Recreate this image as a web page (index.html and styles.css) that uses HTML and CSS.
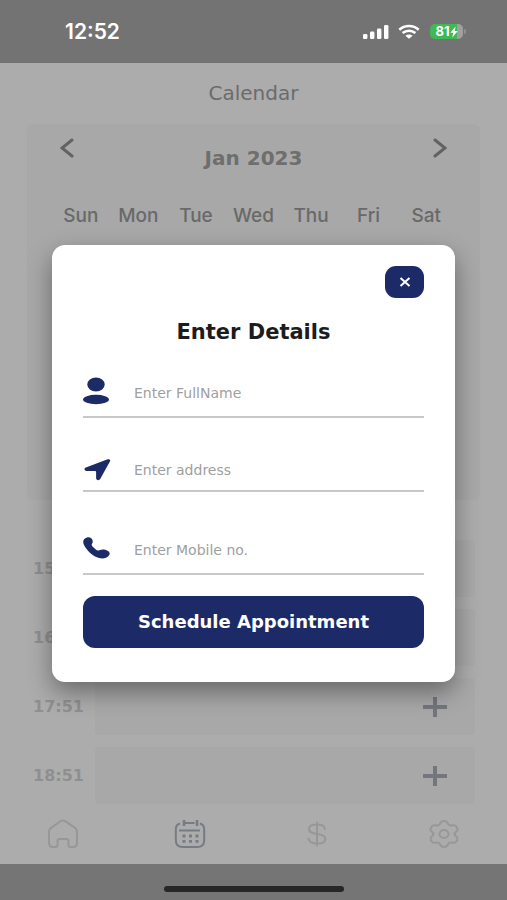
FILE: index.html
```html
<!DOCTYPE html>
<html lang="en">
<head>
<meta charset="utf-8">
<meta name="viewport" content="width=device-width, initial-scale=1">
<title>Calendar</title>
<link rel="stylesheet" href="styles.css">
</head>
<body>
<div class="app">
  <header class="status">
    <span class="status-time">12:52</span>
    <div class="status-icons">
      <svg width="26" height="16" viewBox="0 0 26 16" fill="#fff"><rect x="0" y="10" width="4.400" height="5" rx="1.300"/><rect x="7" y="7.500" width="4.400" height="7.500" rx="1.300"/><rect x="14" y="4.500" width="4.400" height="10.500" rx="1.300"/><rect x="21" y="1" width="4.400" height="14" rx="1.300"/></svg>
      <svg class="wifi" width="22" height="16" viewBox="0 0 22 16" fill="none" stroke="#fff" stroke-width="2.600"><path d="M1.300 5.700C6.800.8 15.200.8 20.700 5.700M4.600 9.100c3.700-3.200 9.100-3.200 12.800 0"/><path d="M7.400 11.700c2.100-1.700 5.100-1.700 7.200 0L11 14.800z" fill="#fff" stroke="none"/></svg>
      <div class="battery">
        <span>81</span>
        <svg width="8" height="12" viewBox="0 0 8 12" fill="#fff"><path d="M5.600.5.3 6.800h3L2.200 11.500 7.800 5H4.700z"/></svg>
      </div>
    </div>
  </header>

  <main class="main">
    <h1 class="page-title">Calendar</h1>
    <section class="calendar">
      <div class="month">
        <button class="arrow" type="button" aria-label="Previous month"><svg width="14" height="20" viewBox="0 0 14 20"><path d="M12 2 2 10l10 8"/></svg></button>
        <h2 class="month-name">Jan 2023</h2>
        <button class="arrow" type="button" aria-label="Next month"><svg width="14" height="20" viewBox="0 0 14 20"><path d="m2 2 10 8-10 8"/></svg></button>
      </div>
      <div class="weekdays"><span>Sun</span><span>Mon</span><span>Tue</span><span>Wed</span><span>Thu</span><span>Fri</span><span>Sat</span></div>
    </section>
    <ul class="slots">
      <li class="slot"><time>15:51</time><div class="slot-box"><button class="add" type="button" aria-label="Add at 15:51"></button></div></li>
      <li class="slot"><time>16:51</time><div class="slot-box"><button class="add" type="button" aria-label="Add at 16:51"></button></div></li>
      <li class="slot"><time>17:51</time><div class="slot-box"><button class="add" type="button" aria-label="Add at 17:51"></button></div></li>
      <li class="slot"><time>18:51</time><div class="slot-box"><button class="add" type="button" aria-label="Add at 18:51"></button></div></li>
    </ul>
  </main>

  <nav class="tabs">
    <a href="#home" aria-label="Home"><svg width="32" height="30" viewBox="0 0 32 30"><path d="M2 12.500c0-1.600.6-2.600 2-3.600L13.500 2.300c1.800-1.200 3.200-1.200 5 0L28 8.900c1.400 1 2 2 2 3.600V24c0 2.600-1.500 4-4 4h-2.500c-1.400 0-2.100-.7-2.100-2v-4c0-1.400-.7-2-2-2h-6.800c-1.300 0-2 .6-2 2v4c0 1.300-.7 2-2.100 2H6c-2.500 0-4-1.400-4-4z"/></svg></a>
    <a class="active" href="#calendar" aria-label="Calendar"><svg width="32" height="30" viewBox="0 0 32 30"><path d="M6 4.500c-2.900.7-4.200 2.700-4.200 6V21c0 5 2.200 7 7 7h14.400c4.800 0 7-2 7-7V10.500c0-3.300-1.300-5.300-4.200-6M10.500 4h10M5 11.500h21"/><path d="M10 1v6M23 1v6" stroke-width="2.600"/><path d="M8.500 17h3m3.500 0h3m3.500 0h3M8.500 22.300h3m3.500 0h3m3.500 0h3" stroke-width="2.800"/></svg></a>
    <a href="#payments" aria-label="Payments"><svg width="22" height="28" viewBox="0 0 22 28"><path d="M11 2.500v23M19 9c-.5-3-3.200-4.400-7.800-4.400S3 6 3 9c0 3.300 2.600 4.200 8 4.900 5.500.7 8.400 1.700 8.400 5 0 3.200-3.100 4.700-8.200 4.700-5 0-8.200-1.600-8.600-4.900"/></svg></a>
    <a href="#settings" aria-label="Settings"><svg width="32" height="30" viewBox="0 0 32 30"><path d="M12.600 3.600C13.300 2.500 14.400 2 16 2s2.700.5 3.400 1.600l.9 1.600c.6 1 1.500 1.400 2.700 1.300l2.200-.2c1.500-.1 2.600.4 3.400 1.600l.6 1c.7 1.100.5 2.200-.5 3.200L27.300 13.500c-.8.9-.8 2.100 0 3l1.400 1.400c1 1 1.200 2.100.5 3.200l-.6 1c-.8 1.200-1.900 1.700-3.400 1.600l-2.200-.2c-1.200-.1-2.100.3-2.700 1.300l-.9 1.600C18.700 27.500 17.600 28 16 28s-2.700-.5-3.400-1.600l-.9-1.600c-.6-1-1.500-1.400-2.700-1.300l-2.200.2c-1.500.1-2.600-.4-3.400-1.600l-.6-1c-.7-1.100-.5-2.200.5-3.200l1.400-1.400c.8-.9.8-2.100 0-3l-1.400-1.400c-1-1-1.200-2.100-.5-3.200l.6-1c.8-1.200 1.900-1.700 3.400-1.600l2.200.2c1.200.1 2.100-.3 2.700-1.300z"/><ellipse cx="16" cy="15" rx="4.500" ry="4"/></svg></a>
  </nav>
  <footer class="home-area"><div class="home-bar"></div></footer>

  <div class="overlay">
    <section class="modal" role="dialog" aria-labelledby="dialog-title">
      <button class="close" type="button" aria-label="Close"><svg width="12" height="10" viewBox="0 0 12 10"><path d="m1.500 1 9 8m0-8-9 8"/></svg></button>
      <h2 class="modal-title" id="dialog-title">Enter Details</h2>
      <form>
        <div class="field">
          <label for="name" aria-label="Full name"><svg width="27" height="32" viewBox="0 0 27 32"><ellipse cx="13" cy="7.500" rx="8.700" ry="7"/><ellipse cx="13" cy="22.500" rx="13" ry="4.700"/></svg></label>
          <input id="name" type="text" placeholder="Enter FullName">
        </div>
        <div class="field field-address">
          <label for="address" aria-label="Address"><svg width="28" height="22" viewBox="0 0 28 22"><path d="M24.700.3c1.800-.5 3.100.7 2.200 2.300L17.200 20c-1 1.800-4.100 1.400-4.100-.7v-6c0-.8-.4-1.200-1.300-1.200l-8.300-.2c-2.300-.1-2.800-2.500-.6-3.300z"/></svg></label>
          <input id="address" type="text" placeholder="Enter address">
        </div>
        <div class="field field-mobile">
          <label for="mobile" aria-label="Mobile number"><svg width="27" height="26" viewBox="0 0 27 26"><path d="M1.600 1.800C3.600-.2 6.700-.3 8.200 1.200c1.700 1.600 2 3.700 1 5.300-.8 1.100-.7 1.800.3 2.900l3.300 3.100c1.300 1.100 2.100 1.300 3.500.8 2.300-1 4.600-.9 6.600-.3 3.600 1 4.600 3.200 3.100 5.300-2 2.900-6 3.800-9.800 2.800C10.300 19.400 3.300 13.200.8 7.400c-.9-2-.8-4 .8-5.600z"/></svg></label>
          <input id="mobile" type="tel" placeholder="Enter Mobile no.">
        </div>
        <button class="submit" type="submit">Schedule Appointment</button>
      </form>
    </section>
  </div>
</div>
</body>
</html>
```
FILE: styles.css
```css
* { box-sizing: border-box; }
body { margin: 0; font-family: "DejaVu Sans", sans-serif; }
button { border: 0; padding: 0; background: none; font: inherit; cursor: pointer; }
h1, h2 { margin: 0; }
svg { display: block; }

.app { position: relative; display: flex; flex-direction: column; min-height: 100vh; background: #acacac; }

.status { display: flex; justify-content: space-between; align-items: center; height: 63px; padding: 0 44px 0 65px; background: #737373; color: #fff; }
.status-time { font: 600 21px/24px Inter, sans-serif; }
.status-icons { display: flex; align-items: center; }
.wifi { margin: 0 10px 0 9px; }
.battery { position: relative; display: flex; align-items: center; justify-content: center; width: 33px; height: 15px; border-radius: 5px; background: linear-gradient(90deg, #3fb956 81%, #a0a0a0 81%); font: 700 13px/15px Inter, sans-serif; }
.battery::after { content: ""; position: absolute; left: 34px; top: 5px; width: 2px; height: 5px; border-radius: 0 2px 2px 0; background: #929292; }

.main { flex: 1; }
.page-title { padding-top: 16px; text-align: center; font-size: 20px; font-weight: 400; line-height: 28px; color: #6b6b6b; }
.calendar { height: 376px; margin: 17px 27px 0; padding: 14px 25px; border-radius: 6px; background: #a8a8a8; }
.month { display: flex; justify-content: space-between; align-items: flex-start; padding: 0 8px; }
.arrow svg { fill: none; stroke: #626262; stroke-width: 3; stroke-linecap: round; }
.month-name { padding-top: 8px; font-size: 20px; font-weight: 700; line-height: 24px; color: #6e6e6e; }
.weekdays { display: grid; grid-template-columns: repeat(7, 1fr); margin-top: 34px; text-align: center; font: 500 19px/24px Inter, sans-serif; color: #696969; }

.slots { display: grid; gap: 12px; margin: 40px 32px 0 33px; padding: 0; list-style: none; }
.slot { display: flex; align-items: center; height: 57px; font-size: 16px; font-weight: 700; line-height: 24px; color: #8f8f8f; }
.slot time { flex: none; width: 62px; }
.slot-box { display: flex; flex: 1; align-items: center; justify-content: flex-end; height: 57px; padding-right: 28px; border-radius: 4px; background: #a8a8a8; }
.add { width: 24px; height: 20px; background: linear-gradient(#74767e, #74767e) center / 4px 100% no-repeat, linear-gradient(#74767e, #74767e) center / 100% 4px no-repeat; }

.tabs { display: grid; grid-template-columns: repeat(4, 1fr); height: 60px; }
.tabs a { display: flex; align-items: center; justify-content: center; }
.tabs svg { fill: none; stroke: #979797; stroke-width: 2; stroke-linejoin: round; stroke-linecap: round; }
.tabs .active svg { stroke: #777b83; stroke-linecap: butt; }
.home-area { display: flex; justify-content: center; height: 36px; padding-top: 22px; background: #757575; }
.home-bar { width: 180px; height: 6px; border-radius: 3px; background: #272727; }

.overlay { position: absolute; inset: 0; display: flex; align-items: center; padding: 27px 52px 0; }
.modal { flex: 1; padding: 21px 31px 34px; border-radius: 13px; background: #fff; box-shadow: 0 10px 24px rgba(0, 0, 0, .38); }
.close { display: flex; align-items: center; justify-content: center; width: 39px; height: 32px; margin-left: auto; border-radius: 11px; background: #1d2a68; }
.close svg { fill: none; stroke: #fff; stroke-width: 2; }
.modal-title { margin-top: 20px; text-align: center; font-size: 21px; font-weight: 700; line-height: 28px; color: #1c1c1c; }
form { padding-top: 30px; }
.field { display: flex; align-items: center; height: 42px; padding-bottom: 6px; border-bottom: 2px solid #c8c8c8; }
.field-address { margin-top: 32px; padding-bottom: 0; }
.field-mobile { margin-top: 41px; }
.field label { width: 51px; }
.field svg { fill: #1d2a68; }
.field input { flex: 1; min-width: 0; padding: 0; border: 0; outline: 0; background: none; font: 400 14px/20px "DejaVu Sans", sans-serif; color: #333; }
.field input::placeholder { color: #a0a0a0; opacity: 1; }
.submit { width: 100%; height: 52px; margin-top: 21px; border-radius: 12px; background: #1d2a68; color: #fff; font-size: 18px; font-weight: 700; line-height: 28px; }
```
